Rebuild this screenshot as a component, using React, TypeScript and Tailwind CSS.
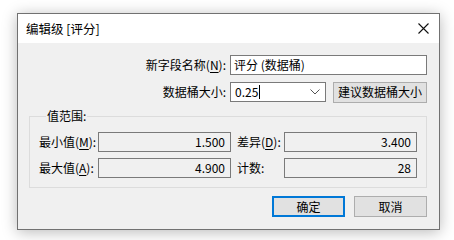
import React from "react";

const font = { fontFamily: '"Noto Sans CJK SC", "Noto Sans", sans-serif' };

function Mn({ c }: { c: string }) {
  return <span className="underline underline-offset-[2px]">{c}</span>;
}

export default function App() {
  return (
    <div
      className="w-[454px] h-[240px] bg-white pt-[13px] pl-[17px] text-[12px] leading-[16px] text-black"
      style={font}
    >
      <div className="w-[423px] h-[217px] border border-[#717171] bg-[#f0f0f0] flex flex-col shadow-[0_2px_14px_rgba(0,0,0,0.28)]">
        {/* Title bar */}
        <div className="h-[29px] bg-white flex items-center justify-between pl-[8px] pr-[10px] shrink-0">
          <span className="text-[12.5px]">编辑级 [评分]</span>
          <svg width="11" height="11" viewBox="0 0 11 11" className="mr-[0px]">
            <path d="M0.5 0.5 L10.5 10.5 M10.5 0.5 L0.5 10.5" stroke="#111" strokeWidth="1.1" fill="none" />
          </svg>
        </div>

        {/* Body */}
        <div className="flex flex-col pt-[12px]">
          {/* Row 1 */}
          <div className="flex items-center h-[20px]">
            <div className="w-[208px] text-right pr-[0px]">
              新字段名称(<Mn c="N" />):
            </div>
            <div className="ml-[4px] w-[197px] h-[20px] bg-white border border-[#7a7a7a] flex items-center pl-[3px]">
              评分 (数据桶)
            </div>
          </div>

          {/* Row 2 */}
          <div className="flex items-center h-[20px] mt-[7px]">
            <div className="w-[208px] text-right">数据桶大小:</div>
            <div className="ml-[4px] w-[96px] h-[20px] bg-white border border-[#7a7a7a] flex items-center pl-[4px] pr-[5px]">
              <span>0.25</span>
              <span className="w-[1px] h-[14px] bg-black ml-[1px]" />
              <div className="flex-1" />
              <svg width="10" height="6" viewBox="0 0 10 6">
                <path d="M0.5 0.5 L5 5 L9.5 0.5" stroke="#555" strokeWidth="1" fill="none" />
              </svg>
            </div>
            <div className="ml-[7px] w-[94px] h-[21px] bg-[#e1e1e1] border border-[#adadad] flex items-center justify-center">
              建议数据桶大小
            </div>
          </div>

          {/* Group box */}
          <fieldset className="ml-[11px] mt-[6px] w-[398px] h-[80px] border border-[#dcdcdc] px-[9px] pb-[8px] pt-[8px]">
            <legend className="ml-[7px] px-[1px] leading-[16px]">值范围:</legend>
            <div className="flex items-center h-[20px]">
              <div className="w-[59px]">
                最小值(<Mn c="M" />):
              </div>
              <div className="w-[133px] h-[20px] border border-[#7a7a7a] flex items-center justify-end pr-[5px]">
                1.500
              </div>
              <div className="ml-[6px] w-[47px]">
                差异(<Mn c="D" />):
              </div>
              <div className="w-[133px] h-[20px] border border-[#7a7a7a] flex items-center justify-end pr-[5px]">
                3.400
              </div>
            </div>
            <div className="flex items-center h-[20px] mt-[6px]">
              <div className="w-[59px]">
                最大值(<Mn c="A" />):
              </div>
              <div className="w-[133px] h-[20px] border border-[#7a7a7a] flex items-center justify-end pr-[5px]">
                4.900
              </div>
              <div className="ml-[6px] w-[47px]">计数:</div>
              <div className="w-[133px] h-[20px] border border-[#7a7a7a] flex items-center justify-end pr-[5px]">
                28
              </div>
            </div>
          </fieldset>

          {/* Buttons */}
          <div className="flex justify-end gap-[9px] mt-[8px] pr-[12px]">
            <div className="w-[73px] h-[21px] bg-[#e1e1e1] border-2 border-[#0078d7] flex items-center justify-center">
              确定
            </div>
            <div className="w-[73px] h-[21px] bg-[#e1e1e1] border border-[#adadad] flex items-center justify-center">
              取消
            </div>
          </div>
        </div>
      </div>
    </div>
  );
}
